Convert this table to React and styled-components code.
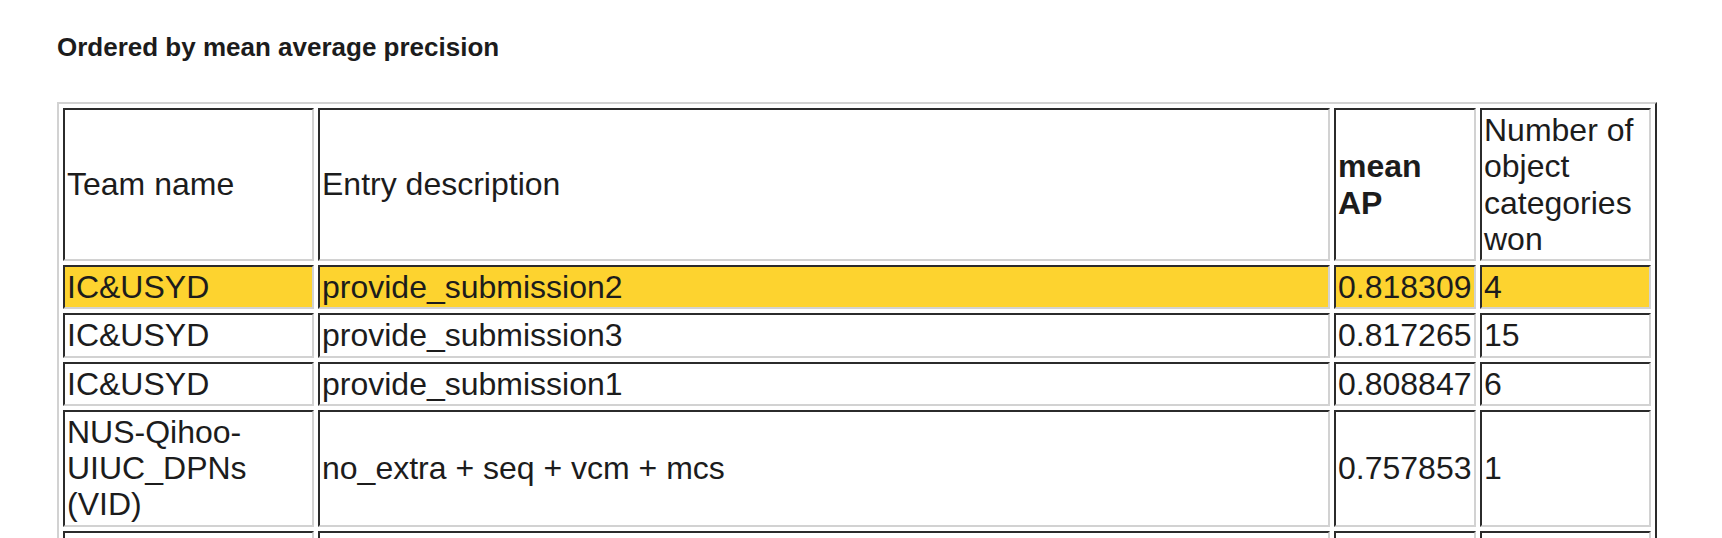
import React from "react";
import styled, { createGlobalStyle } from "styled-components";

const GlobalStyle = createGlobalStyle`
  html, body {
    margin: 0;
    padding: 0;
    background: #ffffff;
    overflow: hidden;
  }
  body {
    font-family: "Liberation Sans", Arial, Helvetica, sans-serif;
    color: #1c1c1c;
  }
`;

const Page = styled.main`
  display: flex;
  flex-direction: column;
  align-items: flex-start;
  padding: 32px 0 0 57px;
`;

const Heading = styled.h4`
  margin: 0 0 40px 0;
  font-size: 26px;
  line-height: 30px;
  font-weight: 700;
  color: #1c1c1c;
`;

const ResultsTable = styled.table`
  width: 1600px;
  table-layout: fixed;
  border-collapse: separate;
  border-spacing: 4px;
  border-style: solid;
  border-width: 2px;
  border-color: #d2d2d2 #2b2b2b #2b2b2b #d2d2d2;
  font-size: 32px;
  line-height: 36.25px;
`;

const Cell = styled.td`
  box-sizing: border-box;
  width: ${(p) => (p.$w ? `${p.$w}px` : "auto")};
  padding: 2px;
  border-style: solid;
  border-width: 2px;
  border-color: #2b2b2b #d2d2d2 #d2d2d2 #2b2b2b;
  background: ${(p) => (p.$highlight ? "#fdd32f" : "#ffffff")};
  vertical-align: middle;
  text-align: left;
  color: #1c1c1c;
`;

const Strong = styled.b`
  font-weight: 700;
`;

const rows = [
  { team: "IC&USYD", entry: "provide_submission2", ap: "0.818309", won: "4", highlight: true },
  { team: "IC&USYD", entry: "provide_submission3", ap: "0.817265", won: "15" },
  { team: "IC&USYD", entry: "provide_submission1", ap: "0.808847", won: "6" },
  { team: "NUS-Qihoo-UIUC_DPNs (VID)", entry: "no_extra + seq + vcm + mcs", ap: "0.757853", won: "1" },
  { team: "NUS-Qihoo-UIUC_DPNs (VID)", entry: "no_extra + seq + vcm", ap: "0.756393", won: "0" },
];

export default function App() {
  return (
    <>
      <GlobalStyle />
      <Page>
        <Heading>Ordered by mean average precision</Heading>
        <ResultsTable>
          <tbody>
            <tr>
              <Cell $w={251}>Team name</Cell>
              <Cell $w={1012}>Entry description</Cell>
              <Cell $w={142}>
                <Strong>mean AP</Strong>
              </Cell>
              <Cell $w={171}>Number of object categories won</Cell>
            </tr>
            {rows.map((r, i) => (
              <tr key={i}>
                <Cell $highlight={r.highlight}>{r.team}</Cell>
                <Cell $highlight={r.highlight}>{r.entry}</Cell>
                <Cell $highlight={r.highlight}>{r.ap}</Cell>
                <Cell $highlight={r.highlight}>{r.won}</Cell>
              </tr>
            ))}
          </tbody>
        </ResultsTable>
      </Page>
    </>
  );
}
